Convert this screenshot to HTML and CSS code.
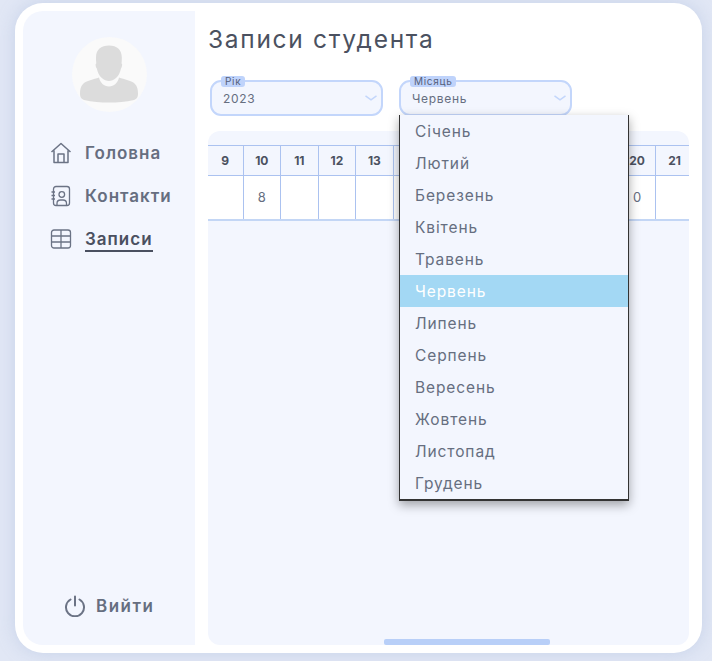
FILE: index.html
```html
<!DOCTYPE html>
<html lang="uk">
<head>
    <meta charset="UTF-8">
    <meta name="viewport" content="width=device-width, initial-scale=1.0">
    <title>Записи студента</title>
    <link rel="stylesheet" href="styles.css">
</head>
<body>
    <div class="card">
        <aside class="sidebar">
            <div class="avatar">
                <svg viewBox="0 0 75 75" width="75" height="75" fill="#dcdcdc">
                    <path d="M37 8.500c-8 0-13 4-13 12 0 2 0 4 .3 6-1 0-.8 3 .5 5 1 4 2 7 5 9.500 2 2 5 3 7.200 3s5-1 7-3c3-2.500 4-5.500 5-9.500 1.300-2 1.500-5 .5-5 .3-2 .3-4 .3-6 0-8-5-12-12.800-12z"/>
                    <path d="M27 40.500c-5 2-13 3-16 6.500-2.500 2.500-3 6-3 10 0 3 1 5 4 6 8 2 17 2.500 25 2.500s17-.5 25-2.500c3-1 4-3 4-6 0-4-.5-7.500-3-10-3-3.500-11-4.500-16-6.500-1 5-5 9-10 9s-9-4-10-9z"/>
                </svg>
            </div>
            <nav class="menu">
                <a class="menu-item">
                    <svg class="icon" viewBox="0 0 22 22" fill="none" stroke="#6b7385" stroke-width="1.500">
                        <path d="M1.500 10 11 1.500 20.500 10M4 8.500v12h14v-12M8 20.500v-8.500h6v8.500" stroke-linejoin="round"/>
                    </svg>
                    <span>Головна</span>
                </a>
                <a class="menu-item">
                    <svg class="icon" viewBox="0 0 22 22" fill="none" stroke="#6b7385" stroke-width="1.300">
                        <rect x="3.500" y="1.500" width="16" height="19" rx="2.500"/>
                        <circle cx="11.800" cy="9.500" r="2.800"/>
                        <path d="M7 20v-1.500c0-2 1.500-3.500 3.500-3.500h2.500c2 0 3.500 1.500 3.500 3.500v1.500M1.500 7h3.500M1.500 10.500h3.500M1.500 14h3.500"/>
                    </svg>
                    <span>Контакти</span>
                </a>
                <a class="menu-item active">
                    <svg class="icon" viewBox="0 0 22 22" fill="none" stroke="#6b7385" stroke-width="1.300">
                        <rect x="1.500" y="2" width="19" height="18" rx="2.500"/>
                        <path d="M1.500 8h19M1.500 14h19M11 2v18"/>
                    </svg>
                    <span>Записи</span>
                </a>
            </nav>
            <a class="logout">
                <svg class="icon" viewBox="0 0 22 22" fill="none" stroke="#6b7385" stroke-width="2" stroke-linecap="round">
                    <path d="M11 1.500v9M6.500 4.500a9 9 0 1 0 9 0"/>
                </svg>
                <span>Вийти</span>
            </a>
        </aside>
        <main class="content">
            <h1>Записи студента</h1>
            <div class="filters">
                <div class="select">
                    <span class="select-label">Рік</span>
                    <span class="select-value">2023</span>
                    <svg class="chevron" viewBox="0 0 12 6" fill="none" stroke="#c3d6fb" stroke-width="1.500"><path d="M.5 .8 6 4.800 11.500 .8"/></svg>
                </div>
                <div class="select">
                    <span class="select-label">Місяць</span>
                    <span class="select-value">Червень</span>
                    <svg class="chevron" viewBox="0 0 12 6" fill="none" stroke="#c3d6fb" stroke-width="1.500"><path d="M.5 .8 6 4.800 11.500 .8"/></svg>
                    <ul class="dropdown">
                        <li>Січень</li>
                        <li>Лютий</li>
                        <li>Березень</li>
                        <li>Квітень</li>
                        <li>Травень</li>
                        <li class="selected">Червень</li>
                        <li>Липень</li>
                        <li>Серпень</li>
                        <li>Вересень</li>
                        <li>Жовтень</li>
                        <li>Листопад</li>
                        <li>Грудень</li>
                    </ul>
                </div>
            </div>
            <div class="table-panel">
                <table class="records">
                    <thead>
                        <tr>
                            <th>9</th><th>10</th><th>11</th><th>12</th><th>13</th><th></th><th></th>
                            <th></th><th></th><th></th><th></th><th>20</th><th>21</th>
                        </tr>
                    </thead>
                    <tbody>
                        <tr>
                            <td></td><td>8</td><td></td><td></td><td></td><td></td><td></td>
                            <td></td><td></td><td></td><td></td><td>0</td><td></td>
                        </tr>
                    </tbody>
                </table>
                <div class="scroll-thumb"></div>
            </div>
        </main>
    </div>
</body>
</html>
```

FILE: styles.css
```css
* {
    box-sizing: border-box;
}

body {
    margin: 0;
    padding: 3px 10px 8px 15px;
    height: 661px;
    overflow: hidden;
    font-family: Inter, "Noto Sans", sans-serif;
    background-color: #e1e7f5;
    color: #666e80;
}

.card {
    display: flex;
    gap: 13px;
    height: 650px;
    padding: 8px 13px 8px 8px;
    border-radius: 28px;
    background-color: #fff;
    box-shadow: 0 0 18px rgba(150, 170, 210, 0.35);
}

.sidebar {
    display: flex;
    flex-direction: column;
    flex: 0 0 172px;
    padding-top: 26px;
    border-radius: 20px 0 0 20px;
    background-color: #f3f6fe;
}

.avatar {
    align-self: center;
    width: 75px;
    height: 75px;
    border-radius: 50%;
    background-color: #fafafa;
}

.menu {
    display: flex;
    flex-direction: column;
    gap: 17px;
    margin-top: 28px;
    padding-left: 27px;
}

.menu-item {
    display: flex;
    align-items: center;
    gap: 13px;
    height: 26px;
    font-size: 17px;
    font-weight: 600;
    letter-spacing: 1px;
}

.icon {
    flex: none;
    width: 22px;
    height: 22px;
}

.active span {
    padding: 3px 0 1px;
    border-bottom: 2px solid #4a5060;
    color: #4a5060;
}

.logout {
    display: flex;
    align-items: center;
    gap: 10px;
    margin-top: auto;
    margin-bottom: 28px;
    padding-left: 41px;
    font-size: 17px;
    font-weight: 600;
    letter-spacing: 1.5px;
}

.content {
    flex: 1;
    min-width: 0;
    display: flex;
    flex-direction: column;
}

h1 {
    margin: 11px 0 0;
    font-size: 24.5px;
    line-height: 34px;
    font-weight: 400;
    letter-spacing: 1.7px;
    color: #4b5160;
}

.filters {
    display: flex;
    gap: 16px;
    margin: 24px 0 15px 2px;
}

.select {
    position: relative;
    width: 173px;
    height: 36px;
    padding: 9px 11px 0;
    border: 2px solid #c3d6fb;
    border-radius: 11px;
    background-color: #f3f6fe;
    font-size: 12px;
    line-height: 16px;
    letter-spacing: 0.7px;
}

.select-label {
    position: absolute;
    top: -6px;
    left: 9px;
    padding: 0 4px;
    border-radius: 3px;
    background-color: #bfd3fb;
    font-size: 10px;
    line-height: 11px;
    color: #55607a;
}

.chevron {
    position: absolute;
    top: 13px;
    right: 4px;
    width: 12px;
    height: 6px;
}

.dropdown {
    position: absolute;
    z-index: 2;
    top: 33px;
    left: -2px;
    width: 230px;
    margin: 0;
    padding: 0;
    list-style: none;
    border: solid #333;
    border-width: 0 1px 2px;
    background-color: #f3f6fe;
    box-shadow: 0 4px 10px rgba(0, 0, 0, 0.35);
    font-size: 15.5px;
    letter-spacing: 0.9px;
}

.dropdown li {
    height: 32px;
    padding-left: 15px;
    line-height: 33px;
}

.dropdown .selected {
    background-color: #a3d8f4;
    color: #fff;
}

.table-panel {
    position: relative;
    flex: 1;
    overflow: hidden;
    padding-top: 14px;
    border-radius: 12px;
    background-color: #f3f6fe;
}

.records {
    table-layout: fixed;
    width: 486px;
    border-collapse: collapse;
}

.records th,
.records td {
    width: 37.5px;
    padding: 0;
    border: 1px solid #abc2f0;
    text-align: center;
    font-size: 12px;
}

.records th:first-child,
.records td:first-child {
    width: 35px;
    border-left: none;
}

.records th {
    height: 30px;
    font-weight: 700;
    color: #4b5160;
}

.records td {
    height: 44px;
    background-color: #fff;
    font-size: 13px;
}

.records tbody tr {
    border-bottom: 2px solid #c3d6f5;
}

.scroll-thumb {
    position: absolute;
    bottom: 0;
    left: 176px;
    width: 166px;
    height: 6px;
    border-radius: 2px;
    background-color: #b8cff8;
}
```
